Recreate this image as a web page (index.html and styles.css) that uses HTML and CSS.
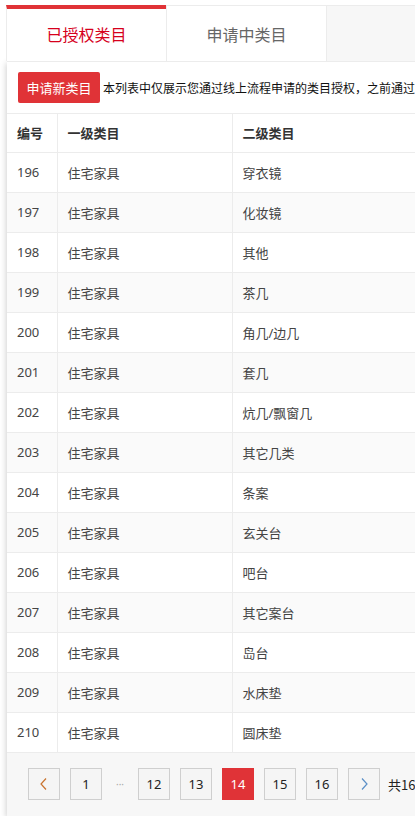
FILE: index.html
```html
<!DOCTYPE html>
<html lang="zh-CN">
<head>
<meta charset="utf-8">
<link rel="stylesheet" href="styles.css">
</head>
<body>
<div class="page">
  <div class="tabs">
    <div class="tab active">已授权类目</div>
    <div class="tab">申请中类目</div>
    <div class="tab-fill"></div>
  </div>
  <div class="panel">
    <div class="toolbar">
      <button class="btn-apply">申请新类目</button>
      <span class="note">本列表中仅展示您通过线上流程申请的类目授权，之前通过线下申请的类目请联系客服查询</span>
    </div>
    <table class="grid">
      <thead>
        <tr><th class="c1">编号</th><th class="c2">一级类目</th><th class="c3">二级类目</th><th class="c4">状态</th></tr>
      </thead>
      <tbody>
        <tr><td>196</td><td>住宅家具</td><td>穿衣镜</td><td></td></tr>
        <tr><td>197</td><td>住宅家具</td><td>化妆镜</td><td></td></tr>
        <tr><td>198</td><td>住宅家具</td><td>其他</td><td></td></tr>
        <tr><td>199</td><td>住宅家具</td><td>茶几</td><td></td></tr>
        <tr><td>200</td><td>住宅家具</td><td>角几/边几</td><td></td></tr>
        <tr><td>201</td><td>住宅家具</td><td>套几</td><td></td></tr>
        <tr><td>202</td><td>住宅家具</td><td>炕几/飘窗几</td><td></td></tr>
        <tr><td>203</td><td>住宅家具</td><td>其它几类</td><td></td></tr>
        <tr><td>204</td><td>住宅家具</td><td>条案</td><td></td></tr>
        <tr><td>205</td><td>住宅家具</td><td>玄关台</td><td></td></tr>
        <tr><td>206</td><td>住宅家具</td><td>吧台</td><td></td></tr>
        <tr><td>207</td><td>住宅家具</td><td>其它案台</td><td></td></tr>
        <tr><td>208</td><td>住宅家具</td><td>岛台</td><td></td></tr>
        <tr><td>209</td><td>住宅家具</td><td>水床垫</td><td></td></tr>
        <tr><td>210</td><td>住宅家具</td><td>圆床垫</td><td></td></tr>
      </tbody>
    </table>
    <div class="pager">
      <span class="pg arrow"><svg width="10" height="14" viewBox="0 0 10 14"><path d="M7 1.5 L2 7 L7 12.5" fill="none" stroke="#c9732e" stroke-width="1.2"/></svg></span>
      <span class="pg">1</span>
      <span class="dots">···</span>
      <span class="pg">12</span>
      <span class="pg">13</span>
      <span class="pg current">14</span>
      <span class="pg">15</span>
      <span class="pg">16</span>
      <span class="pg arrow"><svg width="10" height="14" viewBox="0 0 10 14"><path d="M3 1.5 L8 7 L3 12.5" fill="none" stroke="#5b8fc7" stroke-width="1.2"/></svg></span>
      <span class="total">共16页</span>
    </div>
  </div>
</div>
</body>
</html>
```

FILE: styles.css
```css
html, body {
  margin: 0;
  padding: 0;
  background: #fff;
  overflow: hidden;
}
body {
  font-family: "Noto Sans", "Noto Sans CJK SC", sans-serif;
  color: #333;
}
.page {
  width: 720px;
  padding: 5px 0 0 6px;
}
.tabs {
  display: flex;
  height: 56px;
  border-top: 1px solid #ececec;
  box-sizing: border-box;
}
.tab {
  width: 160px;
  display: flex;
  align-items: center;
  justify-content: center;
  font-size: 16px;
  color: #666;
  background: #fff;
  border-left: 1px solid #ececec;
  box-sizing: border-box;
  font-family: "Noto Sans CJK SC", sans-serif;
}
.tab.active {
  color: #d6001c;
  border-top: 4px solid #e03236;
  margin-top: -1px;
  padding-bottom: 3px;
}
.tab + .tab {
  width: 161px;
  border-right: 1px solid #ececec;
}
.tab-fill {
  flex: 1;
  background: #f7f7f7;
}
.panel {
  margin-left: 1px;
  background: #fff;
  border-top: 1px solid #ececec;
  box-shadow: -1px 2px 6px rgba(0, 0, 0, 0.18);
}
.toolbar {
  display: flex;
  align-items: center;
  gap: 3px;
  padding: 10px 0 10px 11px;
  height: 31px;
  border-bottom: 1px solid #ececec;
}
.btn-apply {
  height: 31px;
  width: 82px;
  padding: 0;
  border: none;
  border-radius: 2px;
  background: #e03337;
  color: #fff;
  font-family: "Noto Sans CJK SC", sans-serif;
  font-size: 13px;
}
.note {
  font-size: 12px;
  color: #111;
  white-space: nowrap;
  font-family: "Noto Sans CJK SC", sans-serif;
}
.grid {
  border-collapse: collapse;
  width: 100%;
  table-layout: fixed;
  font-size: 13px;
}
.grid th, .grid td {
  text-align: left;
  padding: 0 0 0 10px;
  height: 40px;
  box-sizing: border-box;
  border-bottom: 1px solid #ececec;
  border-right: 1px solid #ececec;
  white-space: nowrap;
}
.grid th {
  height: 38px;
  font-weight: bold;
  color: #333;
  font-family: "Noto Sans CJK SC", sans-serif;
}
.grid td {
  color: #444;
}
.grid .c1 { width: 50px; }
.grid .c2 { width: 175px; }
.grid .c3 { width: 250px; }
.grid tbody tr:nth-child(even) td {
  background: #fafafa;
}
.pager {
  display: flex;
  align-items: center;
  background: #f7f7f7;
  height: 63px;
  box-sizing: border-box;
  padding: 0 0 0 21px;
  gap: 10px;
}
.pg {
  width: 32px;
  height: 32px;
  box-sizing: border-box;
  border: 1px solid #cfcfcf;
  background: #f5f5f5;
  display: flex;
  align-items: center;
  justify-content: center;
  font-size: 13px;
  color: #222;
}
.pg.current {
  background: #e03337;
  border-color: #e03337;
  color: #fff;
}
.dots {
  width: 16px;
  text-align: center;
  color: #aaa;
  font-size: 10px;
  letter-spacing: 0;
}
.total {
  margin-left: -2px;
  font-size: 13px;
  color: #222;
  white-space: nowrap;
  font-family: "Noto Sans CJK SC", sans-serif;
}
```
